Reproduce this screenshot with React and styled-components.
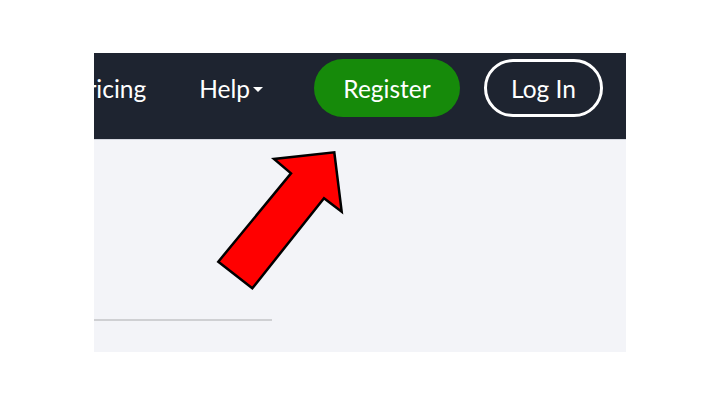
import React from 'react'
import styled, { createGlobalStyle } from 'styled-components'

const GlobalStyle = createGlobalStyle`
    html, body {
        margin: 0;
        padding: 0;
        background: #ffffff;
        font-family: Lato, "Open Sans", sans-serif;
    }
`;

const Page = styled.div`
    width: 720px;
    height: 405px;
    padding: 53px 94px 0;
    box-sizing: border-box;
`;

const Frame = styled.div`
    position: relative;
    width: 532px;
    height: 299px;
    overflow: hidden;
    background: #f3f4f8;
    display: flex;
    flex-direction: column;
`;

const NavBar = styled.nav`
    height: 87px;
    flex-shrink: 0;
    background: #1e2430;
    border-bottom: 1px solid #d6d9e0;
    box-sizing: border-box;
    display: flex;
    align-items: flex-start;
    justify-content: flex-end;
    padding: 6px 23px 0 0;
    white-space: nowrap;
`;

const NavLink = styled.span`
    height: 58px;
    color: #ffffff;
    font-size: 24.5px;
    margin-right: ${p => p.$gap}px;
    display: flex;
    align-items: center;
    flex-shrink: 0;
`;

const Caret = styled.span`
    width: 0;
    height: 0;
    margin-left: 3px;
    margin-top: 2px;
    border-left: 5.5px solid transparent;
    border-right: 5.5px solid transparent;
    border-top: 5px solid #ffffff;
`;

const PillButton = styled.button`
    height: 58px;
    border-radius: 29px;
    font-family: inherit;
    font-size: 24.5px;
    color: #ffffff;
    cursor: pointer;
    flex-shrink: 0;
    box-sizing: border-box;
    padding: 0;
    width: ${p => p.$width}px;
    margin-right: ${p => p.$gap || 0}px;
    background: ${p => (p.$outline ? 'transparent' : '#168a0a')};
    border: ${p => (p.$outline ? '3px solid #ffffff' : 'none')};
`;

const Content = styled.div`
    flex: 1;
    padding-top: 179px;
`;

const Rule = styled.div`
    width: 178px;
    height: 2px;
    background: #cfd0d3;
`;

const Arrow = styled.svg`
    position: absolute;
    left: 0;
    top: 0;
    pointer-events: none;
`;

export default function App() {
    // arrow points relative to the frame (frame origin at 94,53)
    const pts = [
        [218.3, 261.7], [252.3, 288.3], [324, 198.3], [341.7, 211.7],
        [334.3, 152.3], [274, 159], [291, 173.3],
    ].map(([x, y]) => `${x - 94},${y - 53}`).join(' ')

    return (
        <Page>
            <GlobalStyle />
            <Frame>
                <NavBar>
                    <NavLink $gap={53}>Pricing</NavLink>
                    <NavLink $gap={51}>Help<Caret /></NavLink>
                    <PillButton $width={146} $gap={24}>Register</PillButton>
                    <PillButton $width={119} $outline>Log In</PillButton>
                </NavBar>
                <Content>
                    <Rule />
                </Content>
                <Arrow width="532" height="299" viewBox="0 0 532 299">
                    <polygon points={pts} fill="#ff0000" stroke="#000000" strokeWidth="2.5" strokeLinejoin="miter" />
                </Arrow>
            </Frame>
        </Page>
    )
}
